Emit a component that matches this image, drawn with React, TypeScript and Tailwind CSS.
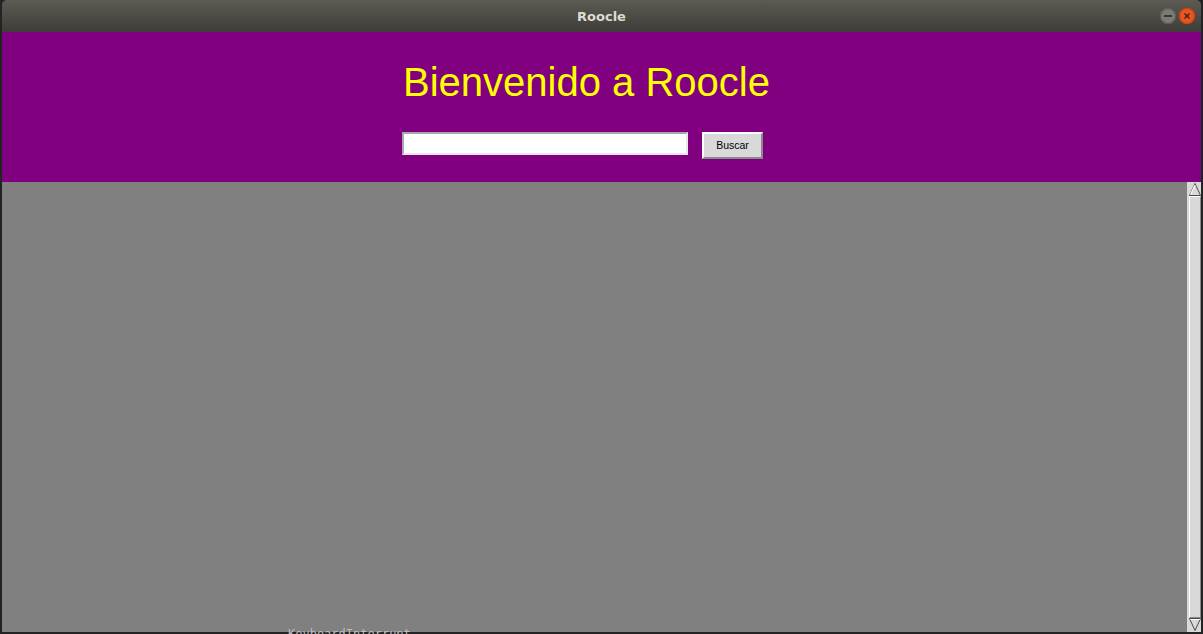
export default function App() {
  return (
    <div className="relative h-[634px] w-[1203px] overflow-hidden bg-[#232323] px-[2px] font-['Liberation_Sans',Arial,sans-serif]">
      <div className="flex h-[632px] w-[1199px] flex-col overflow-hidden rounded-t-[5px]">
        {/* title bar */}
        <div className="relative flex h-[32px] shrink-0 items-center justify-center bg-gradient-to-b from-[#5c5a52] to-[#3e3d39] pt-[2px]">
          <span className="font-['DejaVu_Sans',sans-serif] text-[13px] font-bold text-[#dfdbd2]">
            Roocle
          </span>
          <div className="absolute right-[6px] top-[8px] flex gap-[3px]">
            <div className="flex h-[16px] w-[16px] items-center justify-center rounded-full bg-[#7c7a75] shadow-[inset_0_0_0_1px_#5a5854]">
              <div className="h-[1.5px] w-[8px] bg-[#3a3935]" />
            </div>
            <div className="flex h-[16px] w-[16px] items-center justify-center rounded-full bg-[#e9541f] shadow-[inset_0_0_0_1px_#c24314]">
              <svg width="8" height="8" viewBox="0 0 8 8">
                <path d="M1.5 1.5 L6.5 6.5 M6.5 1.5 L1.5 6.5" stroke="#3a2418" strokeWidth="1.4" />
              </svg>
            </div>
          </div>
        </div>

        {/* header */}
        <div className="flex h-[150px] shrink-0 flex-col items-center bg-[#800080]">
          <h1 className="mt-[30px] pr-[30px] text-[40px] leading-[40px] text-[#ffff00]">
            Bienvenido a Roocle
          </h1>
          <div className="mt-[30px] flex items-start pr-[38px]">
            <input
              type="text"
              className="h-[23px] w-[286px] border-2 border-t-[#a8a8a8] border-l-[#a8a8a8] border-b-[#e8e8e8] border-r-[#e8e8e8] bg-white px-1 text-[12px] outline-none"
            />
            <button className="ml-[14px] h-[27px] w-[61px] border-2 border-t-white border-l-white border-b-[#8a8a8a] border-r-[#8a8a8a] bg-[#d9d9d9] text-[10.5px] text-black">
              Buscar
            </button>
          </div>
        </div>

        {/* content */}
        <div className="flex flex-1">
          <div className="flex-1 bg-[#808080]" />
          <div className="flex w-[14px] flex-col border-l-2 border-l-[#d9d9d9] bg-[#d9d9d9]">
            <div className="flex h-[14px] items-end justify-center">
              <svg width="12" height="13" viewBox="0 0 12 13">
                <path d="M6 0.5 L11.5 12.5 L0.5 12.5 Z" fill="#d9d9d9" stroke="#4a4a4a" strokeWidth="1" />
                <path d="M6 2 L1.5 11.5" stroke="#ffffff" strokeWidth="1.2" />
              </svg>
            </div>
            <div className="flex-1 border border-t-white border-l-white border-b-[#8a8a8a] border-r-[#8a8a8a] bg-[#d9d9d9]" />
            <div className="flex h-[14px] items-start justify-center">
              <svg width="12" height="13" viewBox="0 0 12 13">
                <path d="M0.5 0.5 L11.5 0.5 L6 12.5 Z" fill="#d9d9d9" stroke="#4a4a4a" strokeWidth="1" />
                <path d="M1.5 1.5 L11 1.5" stroke="#ffffff" strokeWidth="1" />
              </svg>
            </div>
          </div>
        </div>
      </div>
      <div className="absolute left-[288px] top-[627px] font-['DejaVu_Sans_Mono',monospace] text-[12px] leading-[14px] text-[#bdbdbd]">
        KeyboardInterrupt
      </div>
    </div>
  );
}
